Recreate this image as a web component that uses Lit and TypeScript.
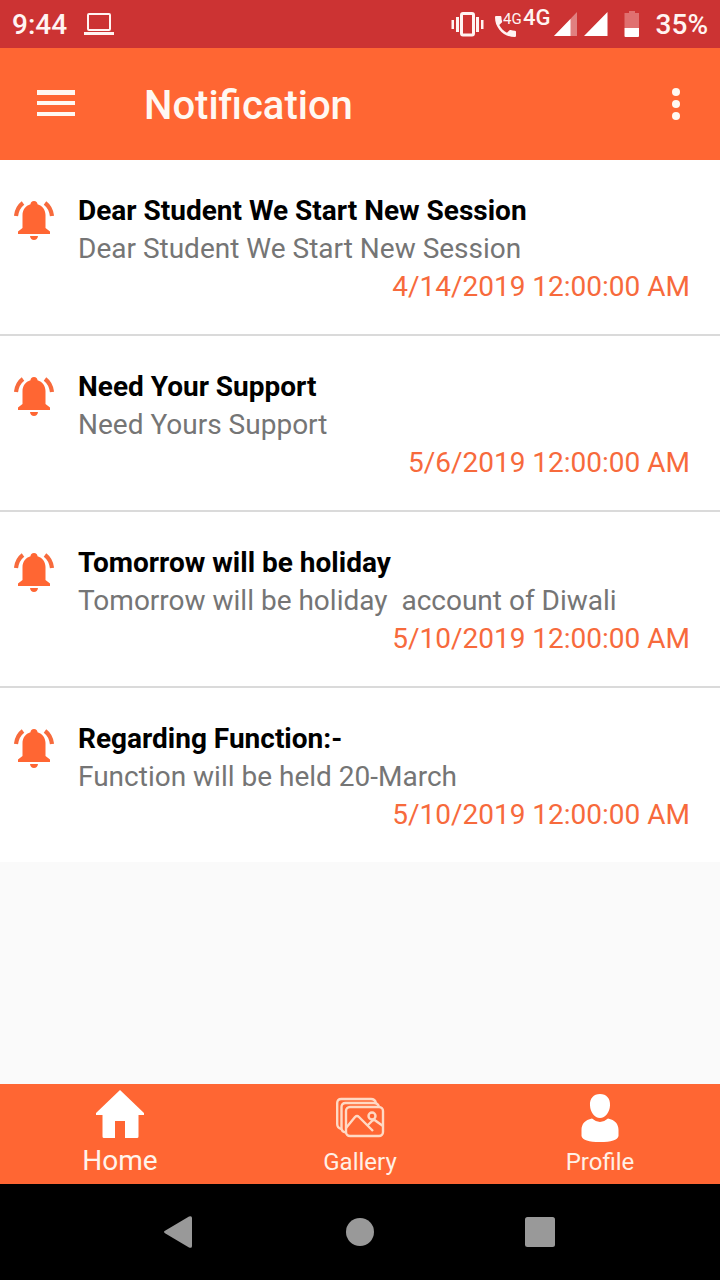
import { LitElement, html, css, svg } from "lit";
import { customElement, property } from "lit/decorators.js";

interface Notice {
  title: string;
  body: string;
  date: string;
}

const notices: Notice[] = [
  { title: "Dear Student We Start New Session", body: "Dear Student We Start New Session", date: "4/14/2019 12:00:00 AM" },
  { title: "Need Your Support", body: "Need Yours Support", date: "5/6/2019 12:00:00 AM" },
  { title: "Tomorrow will be holiday", body: "Tomorrow will be holiday  account of Diwali", date: "5/10/2019 12:00:00 AM" },
  { title: "Regarding Function:-", body: "Function will be held 20-March", date: "5/10/2019 12:00:00 AM" },
];

@customElement("status-bar")
class StatusBar extends LitElement {
  static styles = css`
    :host {
      display: flex;
      align-items: center;
      justify-content: space-between;
      height: 48px;
      padding: 0 12px;
      background: #cc3333;
      color: #fff4f2;
      font-size: 28px;
      font-weight: 500;
      line-height: 48px;
    }
    .group {
      display: flex;
      align-items: center;
    }
    .left {
      gap: 16px;
    }
    .label {
      padding-top: 2px;
    }
    svg {
      display: block;
      flex: none;
    }
    .call {
      display: flex;
      position: relative;
      margin: 0 7px 0 10px;
    }
    .small {
      position: absolute;
      left: 9px;
      top: 11px;
      font-size: 15px;
      font-weight: 400;
      line-height: 16px;
    }
    .network {
      align-self: flex-start;
      font-size: 22px;
      line-height: 38px;
      margin-right: 3px;
    }
    .signals {
      margin-right: 16px;
    }
    .battery {
      margin-right: 16px;
    }
  `;

  render() {
    return html`
      <div class="group left">
        <span class="label">9:44</span>
        <svg width="32" height="48" viewBox="0 0 32 48" aria-hidden="true">
          <rect x="5" y="14" width="22" height="16" rx="1" fill="none" stroke="#fff4f2" stroke-width="2" />
          <path d="M1 32h30v3H1z" fill="#fff4f2" />
        </svg>
      </div>
      <div class="group">
        <svg width="33" height="48" viewBox="0 0 33 48" aria-hidden="true">
          <rect x="10.500" y="13.500" width="12" height="21.500" rx="1.500" fill="none" stroke="#fff4f2" stroke-width="3" />
          <path d="M5 17h3v15H5zM25 17h3v15h-3zM.5 20h2.500v9H.5zM30 20h2.500v9H30z" fill="#fff4f2" />
        </svg>
        <span class="call">
          <svg width="22" height="48" viewBox="0 0 22 48" aria-hidden="true">
            <path
              transform="translate(-2.500 12.500) scale(1.170)"
              d="M6.620 10.790c1.440 2.830 3.760 5.140 6.590 6.590l2.200-2.200c.27-.27.67-.36 1.020-.24 1.120.37 2.330.57 3.570.57.55 0 1 .45 1 1V20c0 .55-.45 1-1 1C10.610 21 3 13.390 3 4c0-.55.45-1 1-1h3.500c.55 0 1 .45 1 1 0 1.250.2 2.450.57 3.570.11.35.03.74-.25 1.020z"
              fill="#fff4f2"
            />
          </svg>
          <span class="small">4G</span>
        </span>
        <span class="network">4G</span>
        <svg class="signals" width="54" height="48" viewBox="0 0 54 48" aria-hidden="true">
          <path d="M0 36L23 12V36z" fill="#e08080" />
          <path d="M0 36L16.500 19V36zM30 36L53.500 12V36z" fill="#fff" />
        </svg>
        <svg class="battery" width="16" height="48" viewBox="0 0 16 48" aria-hidden="true">
          <path d="M5 11h6v2h4v15H.5V13H5z" fill="#e07070" />
          <path d="M.5 28H15v8q0 1-1 1H1.500q-1 0-1-1z" fill="#fff" />
        </svg>
        <span class="label">35%</span>
      </div>
    `;
  }
}

@customElement("notice-item")
class NoticeItem extends LitElement {
  @property({ attribute: false }) notice!: Notice;

  static styles = css`
    :host {
      display: grid;
      grid-template-columns: 44px 1fr;
      column-gap: 22px;
      padding: 32px 30px 28px 12px;
      background: #fff;
      font-size: 28px;
      line-height: 38px;
    }
    svg {
      margin-top: 6px;
    }
    h2,
    p {
      margin: 0;
      font-size: 28px;
      font-weight: 400;
    }
    h2 {
      font-weight: 700;
      color: #000;
    }
    p {
      color: #757575;
      white-space: pre-wrap;
    }
    time {
      display: block;
      text-align: right;
      color: #f76a3c;
    }
  `;

  render() {
    return html`
      <svg width="44" height="44" viewBox="0 0 44 44" aria-hidden="true">
        <path
          d="M22 3c2.200 0 3.500 1.300 3.500 3.200C30.500 7.700 33.500 12 33.500 17v13l4.500 3.500V36H6v-2.500L10.500 30V17c0-5 3-9.300 8-10.800C18.500 4.300 19.800 3 22 3zM18 38h8c-.3 2.600-1.800 4-4 4s-3.700-1.400-4-4z"
          fill="#ff6633"
        />
        <path d="M11 5Q5 9.500 4 18M33 5Q39 9.500 40 18" fill="none" stroke="#f76a3c" stroke-width="4.200" />
      </svg>
      <div>
        <h2>${this.notice.title}</h2>
        <p>${this.notice.body}</p>
        <time>${this.notice.date}</time>
      </div>
    `;
  }
}

const homeIcon = svg`<path d="M24 0L48 23V25H42.500V46.500Q42.500 48 41 48H29V31H19V48H8Q6.500 48 6.500 46.500V25H0V23z" fill="#fff" />`;

const galleryIcon = svg`<g fill="none" stroke="#ffd9c4" stroke-width="2.400">
  <rect x="10" y="17" width="37" height="29" rx="4" />
  <path d="M10 42.500Q5.500 42 5.500 38V17q0-4 4-4H38q4 0 5 4" />
  <path d="M5.500 39Q1.200 38 1.200 34V13q0-4 4-4H35q4 0 5 4" />
  <path d="M10 38L19 27q2-2 4 0L37 41M31 36l5-5q2-2 4 0l7 5" />
  <circle cx="36" cy="26" r="3.500" />
</g>`;

const profileIcon = svg`<path transform="translate(0 2)" d="M24 2C30.500 2 34.500 6.500 34 13.500C33.700 20 29.500 26 24 26S14.300 20 14 13.500C13.500 6.500 17.500 2 24 2zM16 26.500Q20 30 24 30T32 26.500C39 28 42.500 32 42.500 38V44Q41 50 24 50T5.500 44V38C5.500 32 9 28 16 26.500z" fill="#fff" />`;

@customElement("tab-bar")
class TabBar extends LitElement {
  static styles = css`
    nav {
      display: grid;
      grid-template-columns: repeat(3, 1fr);
      height: 100px;
      background: #ff6633;
    }
    a {
      display: flex;
      flex-direction: column;
      align-items: center;
      padding-top: 6px;
      color: #fff0e6;
      font-size: 24px;
      line-height: 36px;
      text-decoration: none;
    }
    svg {
      display: block;
      margin-bottom: 4px;
      overflow: visible;
    }
    .active {
      color: #fff4ec;
      font-size: 28px;
      line-height: 34px;
    }
  `;

  render() {
    const icon = (shape: unknown) =>
      html`<svg width="48" height="50" viewBox="0 0 48 50" aria-hidden="true">${shape}</svg>`;
    return html`
      <nav aria-label="Main">
        <a class="active" href="#home" aria-current="page">${icon(homeIcon)}Home</a>
        <a href="#gallery">${icon(galleryIcon)}Gallery</a>
        <a href="#profile">${icon(profileIcon)}Profile</a>
      </nav>
    `;
  }
}

@customElement("system-nav")
class SystemNav extends LitElement {
  static styles = css`
    :host {
      display: flex;
      justify-content: center;
      gap: 132px;
      height: 96px;
      background: #000;
    }
    button {
      display: grid;
      place-items: center;
      width: 48px;
      padding: 0;
      border: 0;
      background: none;
    }
    svg {
      display: block;
      fill: #999;
    }
  `;

  render() {
    return html`
      <button aria-label="Back">
        <svg width="32" height="32" viewBox="0 0 32 32">
          <path d="M1 14.800L25 .5q3-1.200 3 1.500V30q0 2.700-3 1.500L1 17.200q-2-1.200 0-2.400z" />
        </svg>
      </button>
      <button aria-label="Home">
        <svg width="32" height="32" viewBox="0 0 32 32"><circle cx="16" cy="16" r="14" /></svg>
      </button>
      <button aria-label="Recent apps">
        <svg width="32" height="32" viewBox="0 0 32 32"><rect x="1" y="1" width="30" height="30" rx="2.500" /></svg>
      </button>
    `;
  }
}

@customElement("app-root")
class AppRoot extends LitElement {
  static styles = css`
    :host {
      display: flex;
      flex-direction: column;
      min-height: 100vh;
      background: #fafafa;
      font-family: Roboto, sans-serif;
    }
    header {
      display: flex;
      align-items: center;
      height: 112px;
      padding: 0 20px 0 32px;
      background: #ff6633;
      color: #fff8f2;
    }
    h1 {
      flex: 1;
      margin: 0 0 0 64px;
      padding-top: 4px;
      font-size: 40px;
      font-weight: 500;
      line-height: 48px;
    }
    button {
      display: grid;
      place-items: center;
      width: 48px;
      height: 48px;
      padding: 0;
      border: 0;
      background: none;
    }
    svg {
      display: block;
      fill: #fff8f2;
    }
    main {
      flex: 1;
    }
    ul {
      margin: 0;
      padding: 0;
      list-style: none;
    }
    li + li {
      border-top: 2px solid #dadada;
    }
  `;

  render() {
    return html`
      <status-bar></status-bar>
      <header>
        <button aria-label="Open menu">
          <svg width="48" height="48" viewBox="0 0 48 48"><path d="M5 10h38v5H5zM5 21h38v4H5zM5 32h38v4H5z" /></svg>
        </button>
        <h1>Notification</h1>
        <button aria-label="More options">
          <svg width="48" height="48" viewBox="0 0 48 48">
            <circle cx="24" cy="12" r="4" />
            <circle cx="24" cy="24" r="4" />
            <circle cx="24" cy="36" r="4" />
          </svg>
        </button>
      </header>
      <main>
        <ul>
          ${notices.map((notice) => html`<li><notice-item .notice=${notice}></notice-item></li>`)}
        </ul>
      </main>
      <tab-bar></tab-bar>
      <system-nav></system-nav>
    `;
  }
}
